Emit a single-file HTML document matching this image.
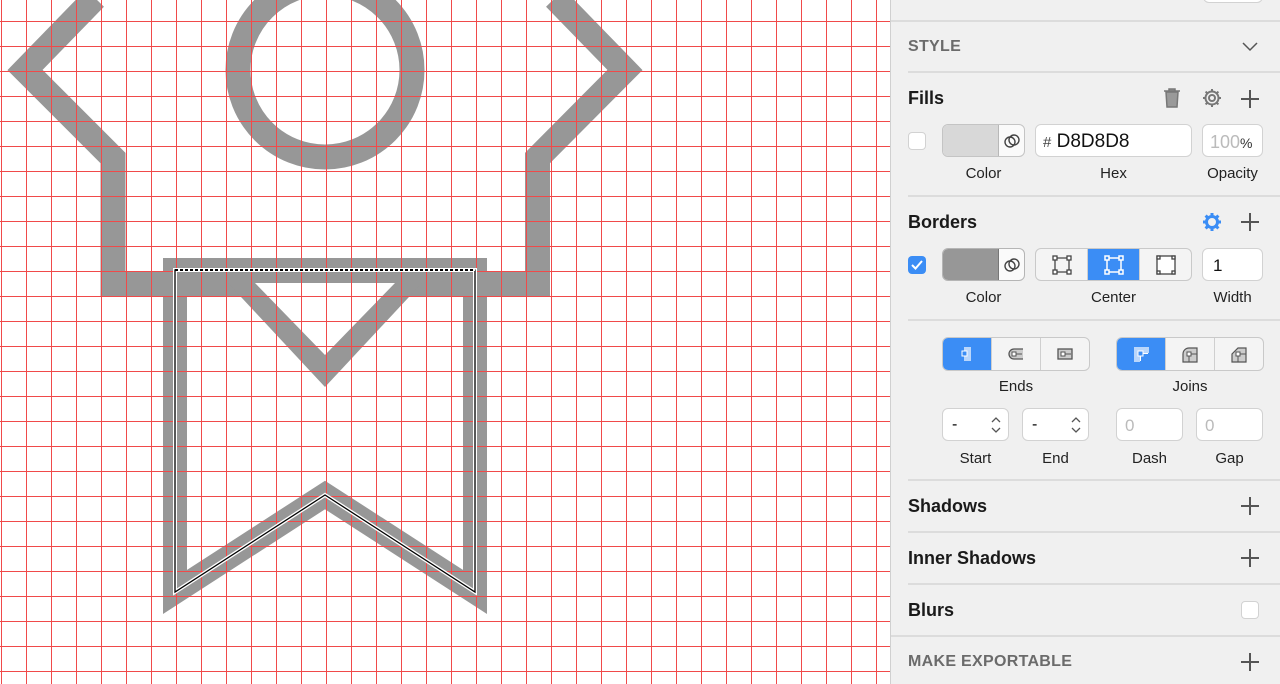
<!DOCTYPE html>
<html><head><meta charset="utf-8"><style>
*{margin:0;padding:0;box-sizing:border-box}
body{width:1280px;height:684px;overflow:hidden;background:#fff;font-family:"Liberation Sans",sans-serif;position:relative}
.cv{position:absolute;left:0;top:0}
#panel{position:absolute;left:890px;top:0;width:390px;height:684px;background:#f0f0f0;border-left:1px solid #d0d0d0}
.a{position:absolute}
.sep{position:absolute;height:2px;background:#dcdcdc;right:0}
.h{position:absolute;left:17px;font-weight:bold;font-size:18px;color:#1a1a1a}
.cap{position:absolute;left:17px;font-weight:bold;font-size:16px;color:#6b6b6b;letter-spacing:.3px}
.lbl{position:absolute;font-size:15px;color:#222;text-align:center}
.box{position:absolute;background:#fff;border:1px solid #d2d2d2;border-radius:6px}
.seg{position:absolute;border:1px solid #c9c9c9;border-radius:6px;background:#f4f4f4;display:flex;overflow:hidden}
.seg div{flex:1;border-right:1px solid #cfcfcf;display:flex;align-items:center;justify-content:center}
.seg div:last-child{border-right:none}
.seg .on{background:#3b8df5}
.plus{position:absolute;width:18px;height:18px}
.plus:before{content:"";position:absolute;left:8px;top:0;width:1.5px;height:18px;background:#555}
.plus:after{content:"";position:absolute;top:8px;left:0;height:1.5px;width:18px;background:#555}
</style></head><body>
<svg class="cv" width="890" height="684" viewBox="0 0 890 684">
<g fill="none" stroke="#979797" stroke-width="25" stroke-linejoin="miter" stroke-miterlimit="10">
<path d="M95,-2 L25,70 L113,158 V283.5 H537.5 V158 L625,70 L555,-2"/>
<circle cx="325" cy="70" r="87"/>
<path stroke-width="24" d="M175,270 H475 V592 L325,495 L175,592 Z"/>
</g>
<polygon points="228,283 422,283 325,387" fill="#979797"/>
<polygon points="255,283 395,283 325,355" fill="#fff"/>
<path shape-rendering="crispEdges" stroke="#f04a4a" stroke-width="1" fill="none" d="M1.5 0V684M26.5 0V684M51.5 0V684M76.5 0V684M101.5 0V684M126.5 0V684M151.5 0V684M176.5 0V684M201.5 0V684M226.5 0V684M251.5 0V684M276.5 0V684M301.5 0V684M326.5 0V684M351.5 0V684M376.5 0V684M401.5 0V684M426.5 0V684M451.5 0V684M476.5 0V684M501.5 0V684M526.5 0V684M551.5 0V684M576.5 0V684M601.5 0V684M626.5 0V684M651.5 0V684M676.5 0V684M701.5 0V684M726.5 0V684M751.5 0V684M776.5 0V684M801.5 0V684M826.5 0V684M851.5 0V684M876.5 0V684M0 21.5H890M0 46.5H890M0 71.5H890M0 96.5H890M0 121.5H890M0 146.5H890M0 171.5H890M0 196.5H890M0 221.5H890M0 246.5H890M0 271.5H890M0 296.5H890M0 321.5H890M0 346.5H890M0 371.5H890M0 396.5H890M0 421.5H890M0 446.5H890M0 471.5H890M0 496.5H890M0 521.5H890M0 546.5H890M0 571.5H890M0 596.5H890M0 621.5H890M0 646.5H890M0 671.5H890"/>
<path d="M175,270 H475 V592 L325,495 L175,592 Z" fill="none" stroke="#fff" stroke-width="4"/>
<path d="M175,270 H475 V592 L325,495 L175,592 Z" fill="none" stroke="#000" stroke-width="1.3"/>
<path d="M175,270 H475" stroke="#fff" stroke-width="2"/>
<path d="M175,270 H475" stroke="#000" stroke-width="2" stroke-dasharray="3 2"/>
</svg>
<div id="panel">
<div class="box" style="left:312px;top:-10px;width:60px;height:13px"></div>
<div class="sep" style="left:0;top:20px"></div>
<div class="cap" style="top:38px">STYLE</div>
<svg class="a" style="left:350px;top:40px" width="18" height="12"><path d="M2 3l7 7 7-7" stroke="#555" stroke-width="1.5" fill="none"/></svg>
<div class="sep" style="left:17px;top:71px"></div>
<div class="h" style="top:88px">Fills</div>
<svg class="a" style="left:271px;top:87px" width="20" height="22"><path d="M2 4h16M7 4V2h6v2M4 5l1 15h10l1-15z" stroke="#777" stroke-width="1.5" fill="#999"/></svg>
<svg class="a" style="left:310px;top:87px" width="22" height="22" viewBox="0 0 22 22"><g stroke="#777" stroke-width="2" fill="none"><circle cx="11" cy="11" r="3"/><circle cx="11" cy="11" r="6.5"/><path d="M11 2v3M11 17v3M2 11h3M17 11h3M4.6 4.6l2 2M15.4 15.4l2 2M4.6 17.4l2-2M15.4 6.6l2-2"/></g></svg>
<div class="plus" style="left:350px;top:90px"></div>
<div class="box" style="left:17px;top:132px;width:18px;height:18px;border-radius:4px"></div>
<div class="a" style="left:51px;top:124px;width:83px;height:33px;border:1px solid #c4c4c4;border-radius:6px;overflow:hidden;background:#fafafa"><div style="width:56px;height:100%;background:#d8d8d8;border-right:1px solid #b8b8b8"></div><svg class="a" style="left:61px;top:8px" width="16" height="16"><circle cx="6" cy="9" r="5" stroke="#444" stroke-width="1.4" fill="none"/><circle cx="10" cy="7" r="5" stroke="#444" stroke-width="1.4" fill="none"/></svg></div>
<div class="box" style="left:144px;top:124px;width:157px;height:33px;font-size:19px;padding:6px 0 0 7px;color:#111"><span style="font-size:15px;color:#444">#</span> D8D8D8</div>
<div class="box" style="left:311px;top:124px;width:61px;height:33px;font-size:18px;padding:7px 0 0 7px;color:#bbb">100<span style="color:#333;font-size:14px">%</span></div>
<div class="lbl" style="left:51px;top:165px;width:83px">Color</div>
<div class="lbl" style="left:144px;top:165px;width:157px">Hex</div>
<div class="lbl" style="left:305px;top:165px;width:73px">Opacity</div>
<div class="sep" style="left:17px;top:195px"></div>
<div class="h" style="top:212px">Borders</div>
<svg class="a" style="left:310px;top:211px" width="22" height="22" viewBox="0 0 22 22"><g stroke="#3b8df5" stroke-width="3" fill="none"><circle cx="11" cy="11" r="5.5"/><path d="M11 2v4M11 16v4M2 11h4M16 11h4M4.6 4.6l2.5 2.5M14.9 14.9l2.5 2.5M4.6 17.4l2.5-2.5M14.9 7.1l2.5-2.5"/></g></svg>
<div class="plus" style="left:350px;top:213px"></div>
<div class="a" style="left:17px;top:256px;width:18px;height:18px;border-radius:4px;background:#3b8df5"><svg width="18" height="18"><path d="M4 9l3.5 3.5L14 5" stroke="#fff" stroke-width="2" fill="none"/></svg></div>
<div class="a" style="left:51px;top:248px;width:83px;height:33px;border:1px solid #b5b5b5;border-radius:6px;overflow:hidden;background:#fafafa"><div style="width:56px;height:100%;background:#979797;border-right:1px solid #777"></div><svg class="a" style="left:61px;top:8px" width="16" height="16"><circle cx="6" cy="9" r="5" stroke="#444" stroke-width="1.4" fill="none"/><circle cx="10" cy="7" r="5" stroke="#444" stroke-width="1.4" fill="none"/></svg></div>
<div class="seg" style="left:144px;top:248px;width:157px;height:33px">
<div><svg width="24" height="24"><g stroke="#444" stroke-width="1.3" fill="#fff"><path d="M5 3v18M19 3v18M3 5h18M3 19h18" fill="none"/><rect x="3" y="3" width="4" height="4"/><rect x="17" y="3" width="4" height="4"/><rect x="3" y="17" width="4" height="4"/><rect x="17" y="17" width="4" height="4"/></g></svg></div>
<div class="on"><svg width="24" height="24"><g stroke="#fff" stroke-width="1.5" fill="#3b8df5"><rect x="5" y="5" width="14" height="14" fill="none"/><rect x="3" y="3" width="4" height="4"/><rect x="17" y="3" width="4" height="4"/><rect x="3" y="17" width="4" height="4"/><rect x="17" y="17" width="4" height="4"/></g></svg></div>
<div><svg width="24" height="24"><g stroke="#444" stroke-width="1.3" fill="#fff"><rect x="3" y="3" width="18" height="18"/><rect x="3" y="3" width="3" height="3"/><rect x="18" y="3" width="3" height="3"/><rect x="3" y="18" width="3" height="3"/><rect x="18" y="18" width="3" height="3"/></g></svg></div>
</div>
<div class="box" style="left:311px;top:248px;width:61px;height:33px;font-size:17px;padding:7px 0 0 10px;color:#111">1</div>
<div class="lbl" style="left:51px;top:289px;width:83px">Color</div>
<div class="lbl" style="left:144px;top:289px;width:157px">Center</div>
<div class="lbl" style="left:305px;top:289px;width:73px">Width</div>
<div class="sep" style="left:17px;top:319px"></div>
<div class="seg" style="left:51px;top:337px;width:148px;height:34px">
<div class="on"><svg width="16" height="18"><rect x="5" y="2" width="7" height="14" fill="#b9d6fb"/><rect x="3" y="6" width="5" height="5" fill="#3b8df5" stroke="#fff"/></svg></div>
<div><svg width="20" height="16"><path d="M17 3H8a5 5 0 0 0 0 10h9" fill="#ccc" stroke="#555" stroke-width="1.3"/><rect x="6" y="6" width="4" height="4" fill="#fff" stroke="#555"/><path d="M10 8h6" stroke="#555"/></svg></div>
<div><svg width="20" height="16"><rect x="3" y="3" width="14" height="10" fill="#ccc" stroke="#555" stroke-width="1.3"/><rect x="6" y="6" width="4" height="4" fill="#fff" stroke="#555"/><path d="M10 8h6" stroke="#555"/></svg></div>
</div>
<div class="seg" style="left:225px;top:337px;width:148px;height:34px">
<div class="on"><svg width="18" height="18"><path d="M2 2h15v6H8v9H2z" fill="#b9d6fb"/><rect x="6" y="6" width="5" height="5" fill="#3b8df5" stroke="#fff"/><path d="M8.5 11v5M11 8.5h5" stroke="#fff"/></svg></div>
<div><svg width="20" height="18"><path d="M3 17V9a6 6 0 0 1 6-6h8v14z" fill="#ccc" stroke="#555" stroke-width="1.2"/><rect x="7" y="7" width="4" height="4" fill="#fff" stroke="#555"/><path d="M9 11v6M11 9h6" stroke="#555"/></svg></div>
<div><svg width="20" height="18"><path d="M3 17V9l6-6h8v14z" fill="#ccc" stroke="#555" stroke-width="1.2"/><rect x="7" y="7" width="4" height="4" fill="#fff" stroke="#555"/><path d="M9 11v6M11 9h6" stroke="#555"/></svg></div>
</div>
<div class="lbl" style="left:51px;top:378px;width:148px">Ends</div>
<div class="lbl" style="left:225px;top:378px;width:148px">Joins</div>
<div class="box" style="left:51px;top:408px;width:67px;height:33px;font-size:16px;padding:7px 0 0 9px">-<svg class="a" style="left:46px;top:6px" width="14" height="20"><path d="M3 7l4-4 4 4M3 13l4 4 4-4" stroke="#555" stroke-width="1.3" fill="none"/></svg></div>
<div class="box" style="left:131px;top:408px;width:67px;height:33px;font-size:16px;padding:7px 0 0 9px">-<svg class="a" style="left:46px;top:6px" width="14" height="20"><path d="M3 7l4-4 4 4M3 13l4 4 4-4" stroke="#555" stroke-width="1.3" fill="none"/></svg></div>
<div class="box" style="left:225px;top:408px;width:67px;height:33px;font-size:17px;padding:7px 0 0 8px;color:#bbb">0</div>
<div class="box" style="left:305px;top:408px;width:67px;height:33px;font-size:17px;padding:7px 0 0 8px;color:#bbb">0</div>
<div class="lbl" style="left:51px;top:450px;width:67px">Start</div>
<div class="lbl" style="left:131px;top:450px;width:67px">End</div>
<div class="lbl" style="left:225px;top:450px;width:67px">Dash</div>
<div class="lbl" style="left:305px;top:450px;width:67px">Gap</div>
<div class="sep" style="left:17px;top:479px"></div>
<div class="h" style="top:496px">Shadows</div>
<div class="plus" style="left:350px;top:497px"></div>
<div class="sep" style="left:17px;top:531px"></div>
<div class="h" style="top:548px">Inner Shadows</div>
<div class="plus" style="left:350px;top:549px"></div>
<div class="sep" style="left:17px;top:583px"></div>
<div class="h" style="top:600px">Blurs</div>
<div class="box" style="left:350px;top:601px;width:18px;height:18px;border-radius:4px"></div>
<div class="sep" style="left:0;top:635px"></div>
<div class="cap" style="top:653px">MAKE EXPORTABLE</div>
<div class="plus" style="left:350px;top:653px"></div>
</div>
</body></html>
